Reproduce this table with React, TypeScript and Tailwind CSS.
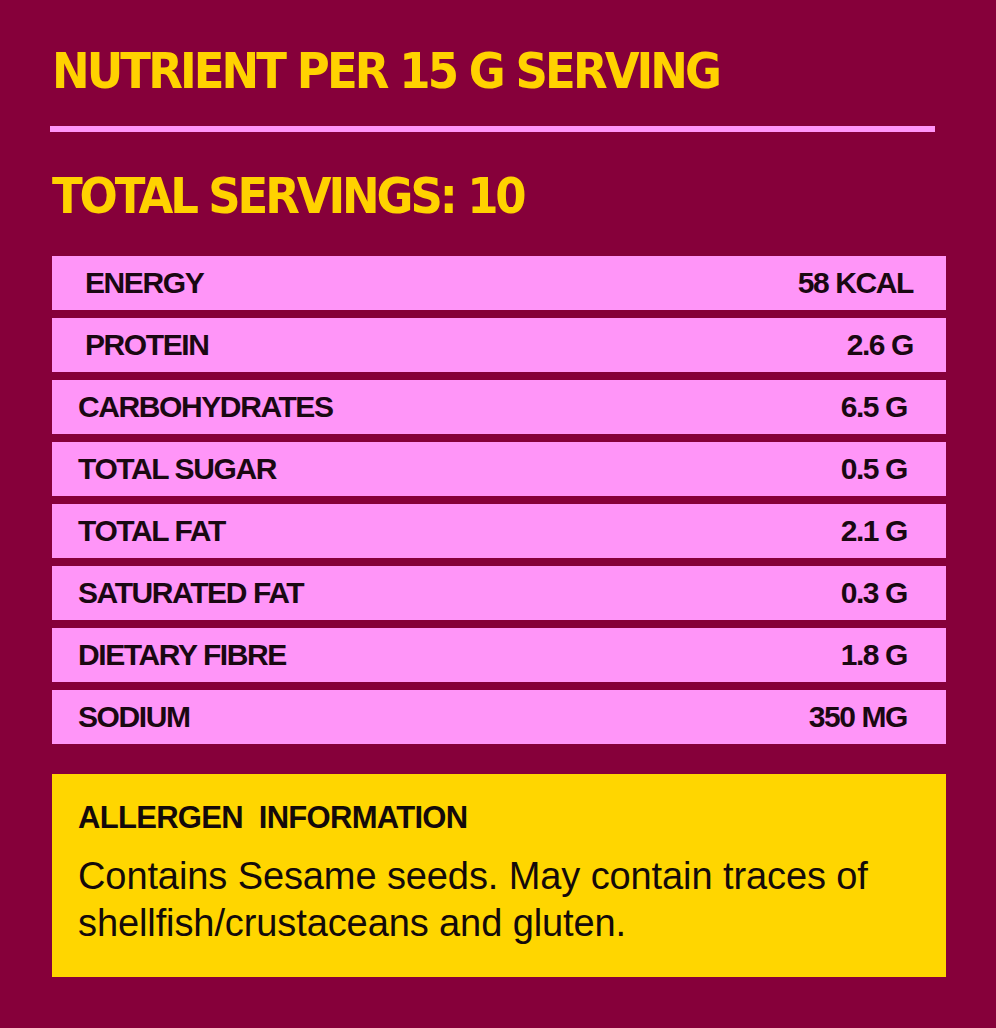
const rows = [
  { label: "ENERGY", value: "58 KCAL", wide: true },
  { label: "PROTEIN", value: "2.6 G", wide: true },
  { label: "CARBOHYDRATES", value: "6.5 G" },
  { label: "TOTAL SUGAR", value: "0.5 G" },
  { label: "TOTAL FAT", value: "2.1 G" },
  { label: "SATURATED FAT", value: "0.3 G" },
  { label: "DIETARY FIBRE", value: "1.8 G" },
  { label: "SODIUM", value: "350 MG" },
];

export default function App() {
  return (
    <main className="min-h-[1028px] w-full bg-[#86003a] pl-[52px] pr-[50px] pt-[46px] font-['Liberation_Sans',sans-serif]">
      <h1 className="font-['DejaVu_Sans_Condensed',sans-serif] text-[50px] font-bold leading-none tracking-[-2.9px] text-[#ffd200]">
        NUTRIENT PER 15 G SERVING
      </h1>
      <div className="mt-[30px] mr-[11px] -ml-[2px] h-[6px] bg-[#ff95f8]" />
      <h2 className="mt-[39px] font-['DejaVu_Sans_Condensed',sans-serif] text-[50px] font-bold leading-none tracking-[-3.1px] text-[#ffd200]">
        TOTAL SERVINGS: 10
      </h2>

      <div className="mt-[35px] flex flex-col gap-[8px]">
        {rows.map((r) => (
          <div
            key={r.label}
            className={
              "flex h-[54px] items-center justify-between bg-[#ff95f8] text-[30px] font-bold leading-none tracking-[-1.4px] text-[#1a0812] " +
              (r.wide ? "pl-[33px] pr-[33px]" : "pl-[26px] pr-[39px]")
            }
          >
            <span>{r.label}</span>
            <span>{r.value}</span>
          </div>
        ))}
      </div>

      <section className="mt-[30px] bg-[#ffd600] px-[26px] pt-[28px] pb-[30px] text-[#140a0a]">
        <h3 className="text-[31px] font-bold leading-none tracking-[-0.7px]">
          ALLERGEN&nbsp; INFORMATION
        </h3>
        <p className="mt-[20px] text-[38px] leading-[47px] tracking-[-0.1px]">
          Contains Sesame seeds. May contain traces of
          <br />
          shellfish/crustaceans and gluten.
        </p>
      </section>
    </main>
  );
}
